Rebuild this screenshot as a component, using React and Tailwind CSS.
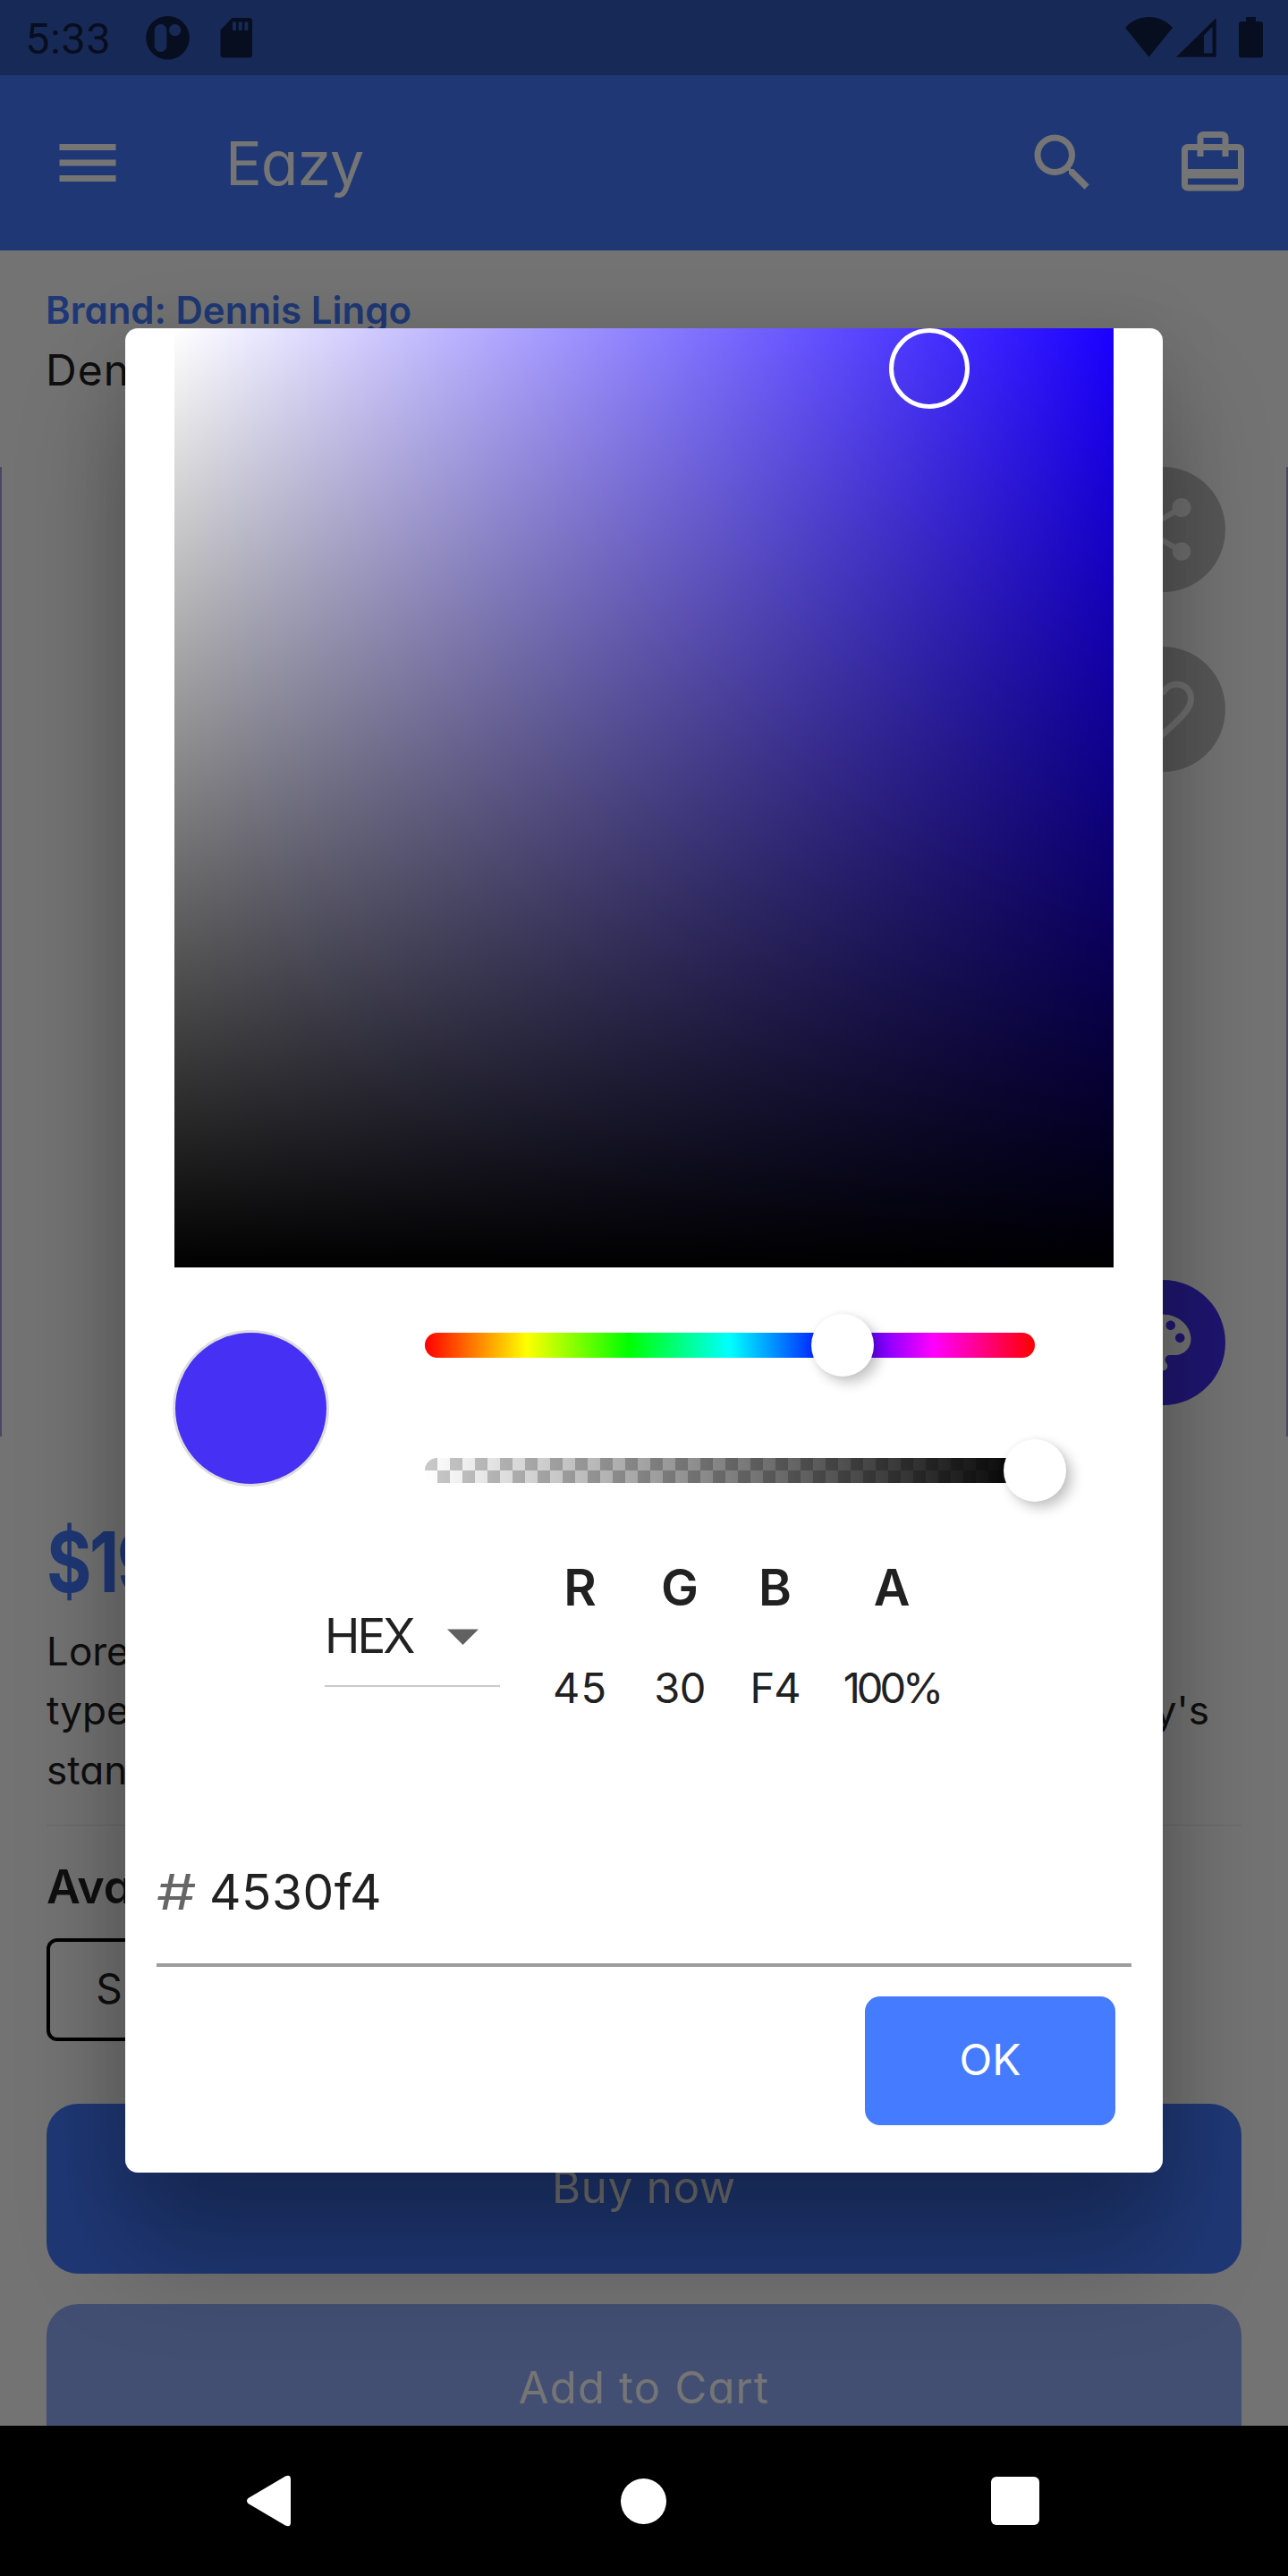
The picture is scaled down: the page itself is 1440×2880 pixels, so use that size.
import { MdMenu, MdSearch, MdCardTravel, MdShare, MdFavoriteBorder, MdColorLens } from "react-icons/md";

function StatusBar() {
  return (
    <div className="flex h-[84px] shrink-0 items-center bg-[#345bbd] pl-[28px] text-[#111f45]">
      <span className="w-[130px] whitespace-nowrap pt-[3px] font-[Roboto] text-[49px] leading-[84px] tracking-[0.4px]">5:33</span>
      <svg className="ml-[4px] h-[84px] w-[52px]" viewBox="162 0 52 84" fill="currentColor">
        <ellipse cx="187.5" cy="42.3" rx="24.3" ry="24.3" />
        <rect x="172.8" y="27" width="13.6" height="31" rx="6.8" fill="#345bbd" />
        <circle cx="195.6" cy="33.6" r="6.6" fill="#345bbd" />
      </svg>
      <svg className="ml-[32px] h-[84px] w-[37px]" viewBox="246 0 37 84" fill="currentColor">
        <path d="M259.500 20H278.500Q282 20 282 23.500V61Q282 64.500 278.500 64.500H250Q246.500 64.500 246.500 61V33.500Z" />
        <path fill="#345bbd" d="M260 24.500h4v9.500h-4zM266.700 24.500h4v9.500h-4zM273.400 24.500h4v9.500h-4z" />
      </svg>
      <svg className="ml-auto h-[84px] w-[188px]" viewBox="1252 0 188 84" fill="currentColor">
        <path d="M1284.500 19C1274 19 1264.500 23.500 1258 31L1284.500 63.700L1311 31C1304.500 23.500 1295 19 1284.500 19Z" />
        <path fillRule="evenodd" d="M1315 63.700L1359.700 20V63.700ZM1346 39.500L1355.500 30V59.500H1346Z" />
        <path d="M1393 19H1404V24H1409Q1412 24 1412 27V61.500Q1412 64.500 1409 64.500H1388Q1385 64.500 1385 61.500V27Q1385 24 1388 24H1393Z" />
      </svg>
    </div>
  );
}

function AppBar() {
  return (
    <div className="flex h-[196px] shrink-0 items-center bg-[#457bff] pl-[56px] pr-[42px] text-white">
      <MdMenu size={84} />
      <h1 className="ml-[112px] text-[68px] leading-[196px] tracking-[-1px]">Eazy</h1>
      <MdSearch size={84} className="ml-auto" />
      <MdCardTravel size={84} className="ml-[84px]" />
    </div>
  );
}

function Hero() {
  return (
    <div className="flex h-[1084px] shrink-0 flex-col items-end border-x-2 border-[#a598d8] pr-[68px]">
      <div className="flex size-[140px] items-center justify-center rounded-full bg-[#bdbdbd] text-[#f0f0f0]">
        <MdShare size={84} />
      </div>
      <div className="mt-[61px] flex size-[140px] items-center justify-center rounded-full bg-[#bdbdbd] text-[#f0f0f0]">
        <MdFavoriteBorder size={84} />
      </div>
      <div className="mt-auto mb-[35px] flex size-[140px] items-center justify-center rounded-full bg-[#4530f4] text-[#fafafa]">
        <MdColorLens size={84} />
      </div>
    </div>
  );
}

function ProductScreen() {
  return (
    <div className="flex h-[2712px] flex-col overflow-hidden bg-[#fafafa] text-[#212121]">
      <StatusBar />
      <AppBar />
      <p className="mt-[37px] shrink-0 whitespace-nowrap pl-[51px] text-[42px] font-semibold leading-[60px] text-[#457bff]">
        Brand: Dennis Lingo
      </p>
      <p className="mb-[71px] shrink-0 whitespace-nowrap pl-[51px] text-[48px] leading-[74px] tracking-[1px]">Dennis Lingo</p>
      <Hero />
      <div className="flex shrink-0 flex-col px-[52px]">
        <p className="mt-[90px] w-[200px] origin-left scale-x-[0.82] text-[94px] font-bold leading-[100px] tracking-[-3px] text-[#457bff]">
          $199
        </p>
        <div className="mt-[17px] whitespace-nowrap text-[44px] leading-[67px]">
          <p>Lorem</p>
          <div className="-mt-px flex w-[1300px] justify-between">
            <span>typesetting</span>
            <span>industry's</span>
          </div>
          <p>standard</p>
        </div>
        <div className="mt-[27px] h-px bg-[#e2e2e2]" />
        <h2 className="mt-[34px] w-[110px] overflow-hidden text-[52px] font-semibold leading-[70px]">Ava</h2>
        <div className="mt-[22px] flex h-[115px] w-[140px] items-center justify-center rounded-[12px] border-4 border-black pb-[2px] text-[46px]">
          S
        </div>
        <button className="mt-[70px] h-[190px] shrink-0 rounded-[35px] bg-[#457bff] pb-[3px] text-[49px] tracking-[0.9px] text-white">
          Buy now
        </button>
        <button className="mt-[34px] h-[190px] shrink-0 rounded-[35px] bg-[#91adfb] pb-[3px] text-[49px] tracking-[1.2px] text-white">
          Add to Cart
        </button>
      </div>
    </div>
  );
}

function NavBar() {
  return (
    <div className="flex h-[168px] items-center justify-between bg-black pl-[275px] pr-[278px] text-white">
      <svg className="h-[58px] w-[51px]" viewBox="275 2767 51 58" fill="currentColor">
        <path d="M277.500 2793L319 2768.500Q325 2766 325 2772V2820Q325 2826 319 2823.500L277.500 2799Q274.500 2796 277.500 2793Z" />
      </svg>
      <span className="ml-[4px] size-[51px] rounded-full bg-white" />
      <span className="size-[54px] rounded-[6px] bg-white" />
    </div>
  );
}

const thumb =
  "absolute top-1/2 size-[70px] -translate-x-1/2 -translate-y-1/2 rounded-full bg-white shadow-[7px_7px_14px_rgba(0,0,0,0.22),0_0_7px_rgba(0,0,0,0.06)]";

function Sliders() {
  return (
    <div className="flex w-[682px] flex-col gap-[112px] pt-[3px]">
      <div className="relative h-[28px] rounded-full bg-[linear-gradient(to_right,#f00,#ff0,#0f0,#0ff,#00f,#f0f,#f00)]">
        <span className={thumb} style={{ left: 467 }} />
      </div>
      <div className="relative h-[28px] rounded-full bg-[linear-gradient(to_right,rgba(0,0,0,0),#000),repeating-conic-gradient(#fff_0_25%,#c9c9c9_0_50%)] bg-[length:100%_100%,28px_28px] bg-[position:0_0,0px_0px]">
        <span className={thumb} style={{ left: 682 }} />
      </div>
    </div>
  );
}

const channels = [
  { name: "R", value: "45", width: 111, spacing: 1 },
  { name: "G", value: "30", width: 112, spacing: -0.5 },
  { name: "B", value: "F4", width: 101, spacing: -1 },
  { name: "A", value: "100%", width: 160, spacing: -4 },
];

function Channels() {
  return (
    <div className="mt-[78px] flex h-[182px] pl-[223px]">
      <div className="flex w-[196px] flex-col">
        <div className="mt-[54px] flex h-[71px] items-center text-[53px]">
          <span className="w-[137px] tracking-[-3px]">HEX</span>
          <svg className="h-[18px] w-[35px] text-[#616161]" viewBox="0 0 35 18" fill="currentColor">
            <path d="M0 .5h35L17.500 18z" />
          </svg>
        </div>
        <div className="mt-[19px] h-[1.5px] bg-[#cacaca]" />
      </div>
      <div className="ml-[34px] flex text-center">
        {channels.map((c) => (
          <div key={c.name} style={{ width: c.width }}>
            <p className="text-[56px] font-semibold leading-[71px]">{c.name}</p>
            <p className="mt-[41px] text-[47px] leading-[70px]" style={{ letterSpacing: c.spacing }}>
              {c.value}
            </p>
          </div>
        ))}
      </div>
    </div>
  );
}

function ColorDialog() {
  return (
    <div className="absolute left-[140px] top-[367px] flex h-[2062px] w-[1160px] flex-col rounded-[14px] bg-white text-[#212121] shadow-[0_85px_120px_rgba(0,0,0,0.29),0_0_80px_rgba(0,0,0,0.09)]">
      <div className="relative ml-[55px] size-[1050px] shrink-0 bg-[linear-gradient(to_bottom,rgba(0,0,0,0),#000),linear-gradient(to_right,#fff,#1b00ff)]">
        <span className="absolute left-[799px] top-0 size-[90px] rounded-full border-[5px] border-white" />
      </div>
      <div className="mt-[70px] flex h-[175px] pl-[53px]">
        <div className="mr-[107px] size-[175px] rounded-full border-[3.5px] border-[#dedede] bg-[#4530f4]" />
        <Sliders />
      </div>
      <Channels />
      <div className="mx-[35px] mt-[153px] border-b-[4px] border-[#9c9c9c] pb-[40px]">
        <div className="flex text-[55px] leading-[80px]">
          <span className="mr-[25px] w-[34px] origin-left scale-x-[1.28] text-[#666]">#</span>
          <span className="tracking-[0.5px]">4530f4</span>
        </div>
      </div>
      <button className="ml-[827px] mt-[33px] h-[144px] w-[280px] rounded-[17px] bg-[#457bff] pb-[2px] text-[48px] text-white">OK</button>
    </div>
  );
}

export default function App() {
  return (
    <div className="relative h-[2880px] w-[1440px] overflow-hidden font-[Inter,sans-serif] [font-feature-settings:'cv11']">
      <ProductScreen />
      <div className="absolute inset-x-0 top-0 h-[2712px] overflow-hidden bg-black/54">
        <ColorDialog />
      </div>
      <NavBar />
    </div>
  );
}
